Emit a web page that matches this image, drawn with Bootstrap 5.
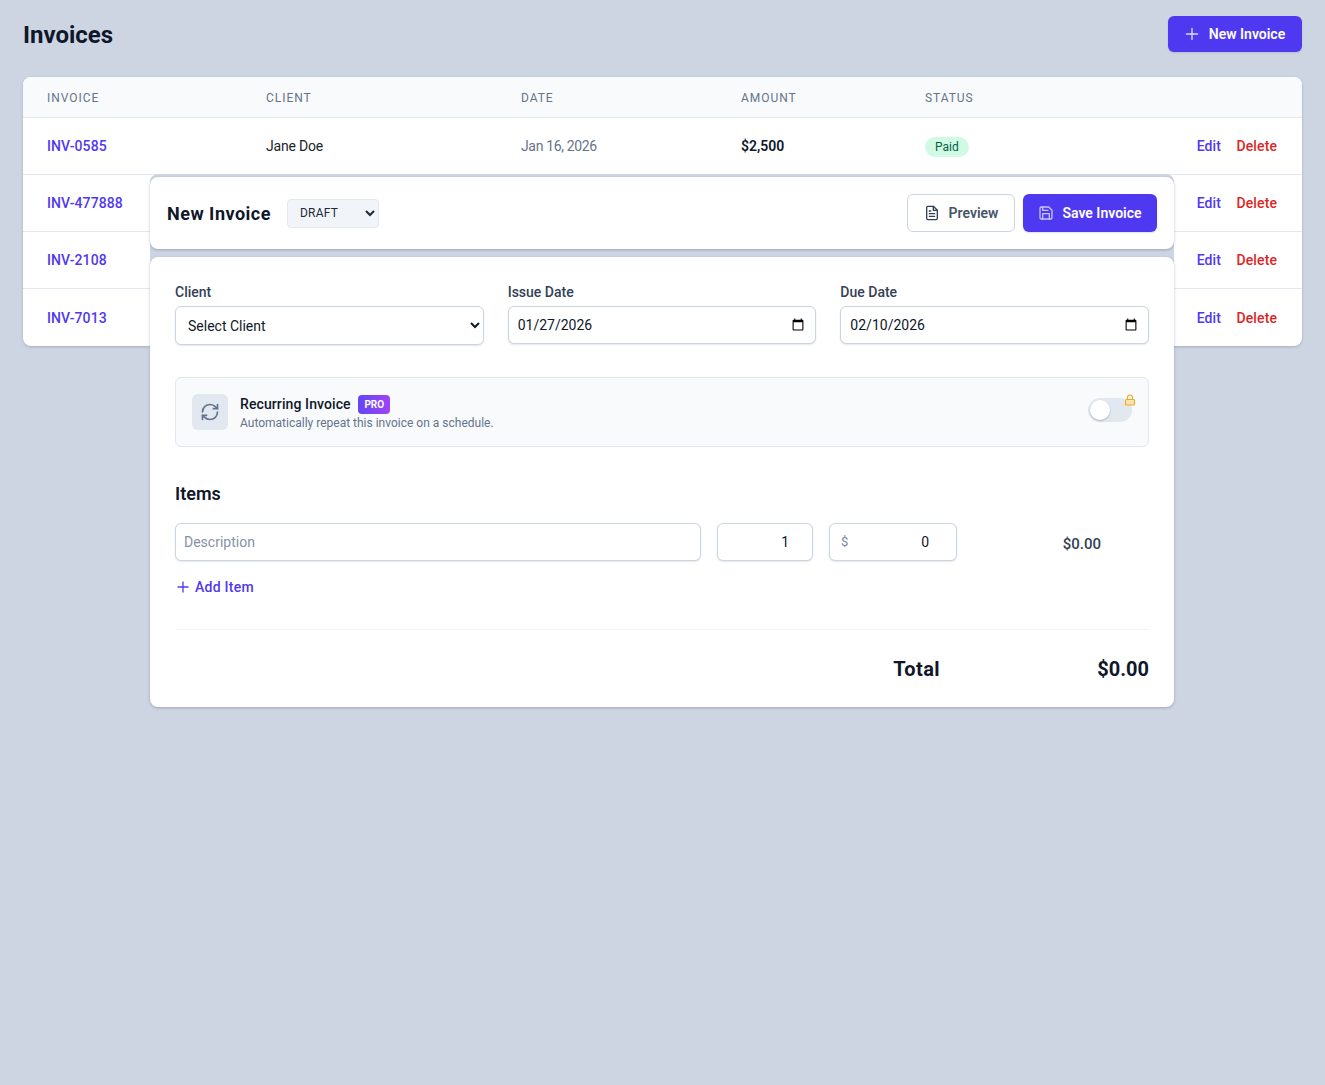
<!DOCTYPE html>
<html lang="en"><head><meta charset="utf-8"><title>Invoices</title>
<link href="https://cdn.jsdelivr.net/npm/bootstrap@5.3.0/dist/css/bootstrap.min.css" rel="stylesheet">
<style>
body{background:#cdd5e3;font-family:Roboto,"Liberation Sans",sans-serif;font-size:14px;color:#0f172a;min-height:1085px;position:relative;padding:16px 23px}
h1.title{font-size:24px;font-weight:700;color:#0f172a;margin:3px 0 0}
.top{height:36px;margin-bottom:25px}
.btn-indigo{background:#4f39f0;color:#fff;border:0;font-weight:600;font-size:14px;border-radius:6px;box-shadow:0 1px 2px rgba(0,0,0,.12)}
.btn-indigo:hover{background:#4f39f0;color:#fff}
.btn-new{height:36px;width:134px;gap:10px}
.tcard{background:#fff;border-radius:8px;box-shadow:0 1px 3px rgba(15,23,42,.2);overflow:hidden}
.tcard table{table-layout:fixed;width:100%;margin:0;--bs-table-bg:transparent;border-collapse:separate;border-spacing:0}
.tcard th{background:#f8fafc;color:#64748b;font-size:12px;font-weight:400;letter-spacing:.95px;height:41px;padding:1px 0 0 24px;vertical-align:middle;border-bottom:1px solid #e2e8f0}
.tcard td{height:57px;padding:1px 0 0 24px;vertical-align:middle;font-size:14px;border-bottom:1px solid #e2e8f0}
.tcard tr:last-child td{border-bottom:0}
.inv{color:#4f39f0;font-weight:500;text-decoration:none;letter-spacing:.1px}
.cl{letter-spacing:-.2px}
.dt{color:#64748b;letter-spacing:-.35px}.amt{font-weight:600;color:#0f172a}
.paid{display:inline-block;background:#d1fae5;color:#065f46;font-size:12px;font-weight:400;border-radius:10px;height:20px;line-height:21px;padding:0 10px;margin-top:1px}
.act{text-align:right;padding-right:25px!important}
.act a{font-weight:500;text-decoration:none;margin-left:12px;letter-spacing:.1px}
.act .e{color:#4f39f0}.act .d{color:#dc2626}
.overlay{position:absolute;left:150px;top:174px;width:1024px;background:#cdd5e3;border-radius:8px;padding-top:3px}
.mcard{background:#fff;border-radius:8px;box-shadow:0 1px 3px rgba(15,23,42,.25)}
.mhead{height:72px;padding:0 17px;margin-bottom:8px}
.mhead h2{font-size:18px;font-weight:700;margin:2px 0 0;color:#0f172a;letter-spacing:.5px}
.form-control,.form-select{border:1px solid #cbd5e1;border-radius:6px;font-size:14px;color:#0f172a;box-shadow:0 1px 2px rgba(15,23,42,.1)}
.mhead .status{appearance:auto;background-image:none;width:92px;height:29px;background-color:#f1f5f9;border:1px solid #e2e8f0;border-radius:4px;font-size:12px;font-weight:400;letter-spacing:.2px;padding:0 0 0 8px;color:#1e293b;box-shadow:none}
.btn-prev{height:38px;width:108px;background:#fff;border:1px solid #cbd5e1;border-radius:6px;color:#475569;font-weight:600;font-size:14px;gap:9px}
.btn-save{height:38px;width:134px;gap:8px}
.mbody{height:450px;padding:25px}
.flabel{font-size:14px;font-weight:500;color:#334155;margin-bottom:4px;line-height:20px;display:block}
.fields{gap:24px;margin-bottom:32px}
.fields>div{flex:1 1 0}
.fields .form-select{appearance:auto;background-image:none;height:39px;padding:0 8px}
.fields .form-control{height:38px;padding:0 8px 0 9px}
.rec{height:70px;background:#f8fafc;border:1px solid #e2e8f0;border-radius:6px;padding:0 16px;gap:12px;position:relative;margin-bottom:34px}
.rico{width:36px;height:36px;background:#e2e8f0;border-radius:6px;flex:none}
.rtxt{padding-top:2px}
.rt{font-weight:500;font-size:14px;color:#0f172a;line-height:19px;letter-spacing:.1px}
.rs{font-size:12px;color:#64748b;line-height:18px}
.pro{background:linear-gradient(90deg,#6246f5,#a044f5);color:#fff;font-size:10px;font-weight:700;border-radius:4px;height:19px;width:32px;line-height:19px;text-align:center;margin-left:4px;letter-spacing:0}
.sw{position:absolute;right:16px;top:20px;width:44px;height:24px;background:#e2e8f0;border-radius:12px}
.sw i{position:absolute;left:2px;top:2px;width:20px;height:20px;border-radius:50%;background:#fff;box-shadow:0 1px 2px rgba(15,23,42,.25)}
.lock{position:absolute;right:12px;top:16px}
.items{font-size:18px;font-weight:600;color:#0f172a;margin:0 0 16px;line-height:26px}
.irow{gap:16px;height:38px}
.irow .form-control{height:38px;flex:none}
.irow .desc{width:526px;padding:0 8px}
.irow .desc::placeholder{color:#8592a6}
.irow .qty{width:96px;text-align:right;padding:0 23px 0 0}
.pw{width:128px;flex:none;position:relative}
.pw .form-control{width:100%;text-align:right;padding:0 27px 0 0}
.pw span{position:absolute;left:12px;top:9px;color:#78869b;font-size:13px;line-height:20px}
.lt{width:176px;flex:none;padding-right:48px;text-align:right;font-size:15px;font-weight:500;color:#334155;line-height:42px}
.add{color:#4f39f0;font-weight:500;text-decoration:none;gap:6px;margin:16px 0 32px 2px;height:20px;letter-spacing:.25px}
.tot{border-top:1px solid #f1f5f9;padding-top:26px;font-size:20px;font-weight:700;color:#0f172a;line-height:26px}
.tot .l{letter-spacing:.4px}
.tot .v{width:209px;text-align:right}
</style></head><body>
<div class="top d-flex justify-content-between align-items-center">
<h1 class="title">Invoices</h1>
<button class="btn btn-indigo btn-new d-flex align-items-center justify-content-center p-0"><svg width="14" height="14" viewBox="0 0 14 14" fill="none" stroke="#dcd8fc" stroke-width="1.4" stroke-linecap="round"><path d="M7 1.5v11M1.5 7h11"/></svg>New Invoice</button>
</div>
<div class="tcard">
<table class="table">
<colgroup><col style="width:219px"><col style="width:255px"><col style="width:220px"><col style="width:184px"><col style="width:190px"><col></colgroup>
<thead><tr><th>INVOICE</th><th>CLIENT</th><th>DATE</th><th>AMOUNT</th><th>STATUS</th><th></th></tr></thead>
<tbody>
<tr><td><a class="inv" href="#">INV-0585</a></td><td class="cl">Jane Doe</td><td class="dt">Jan 16, 2026</td><td class="amt">$2,500</td><td><span class="paid">Paid</span></td><td class="act"><a class="e" href="#">Edit</a> <a class="d" href="#">Delete</a></td></tr>
<tr><td><a class="inv" href="#">INV-477888</a></td><td></td><td></td><td></td><td></td><td class="act"><a class="e" href="#">Edit</a> <a class="d" href="#">Delete</a></td></tr>
<tr><td><a class="inv" href="#">INV-2108</a></td><td></td><td></td><td></td><td></td><td class="act"><a class="e" href="#">Edit</a> <a class="d" href="#">Delete</a></td></tr>
<tr><td><a class="inv" href="#">INV-7013</a></td><td></td><td></td><td></td><td></td><td class="act"><a class="e" href="#">Edit</a> <a class="d" href="#">Delete</a></td></tr>
</tbody></table>
</div>
<div class="overlay">
<div class="mcard mhead d-flex align-items-center justify-content-between">
<div class="d-flex align-items-center gap-3"><h2>New Invoice</h2><select class="form-select status"><option>DRAFT</option></select></div>
<div class="d-flex gap-2">
<button class="btn btn-prev d-flex align-items-center justify-content-center p-0"><svg width="16" height="16" viewBox="0 0 24 24" fill="none" stroke="#334155" stroke-width="2" stroke-linecap="round" stroke-linejoin="round"><path d="M14 2H6a2 2 0 0 0-2 2v16a2 2 0 0 0 2 2h12a2 2 0 0 0 2-2V8z"/><path d="M14 2v6h6M8 13h8M8 17h8M8 9h2"/></svg>Preview</button>
<button class="btn btn-indigo btn-save d-flex align-items-center justify-content-center p-0"><svg width="16" height="16" viewBox="0 0 24 24" fill="none" stroke="#c7c2fb" stroke-width="2" stroke-linecap="round" stroke-linejoin="round"><path d="M19 21H5a2 2 0 0 1-2-2V5a2 2 0 0 1 2-2h11l5 5v11a2 2 0 0 1-2 2z"/><path d="M17 21v-8H7v8M7 3v5h8"/></svg>Save Invoice</button>
</div></div>
<div class="mcard mbody">
<div class="fields d-flex">
<div><label class="flabel">Client</label><select class="form-select"><option>Select Client</option></select></div>
<div><label class="flabel">Issue Date</label><input type="date" class="form-control" value="2026-01-27"></div>
<div><label class="flabel">Due Date</label><input type="date" class="form-control" value="2026-02-10"></div>
</div>
<div class="rec d-flex align-items-center">
<div class="rico d-flex align-items-center justify-content-center"><svg width="20" height="20" viewBox="0 0 24 24" fill="none" stroke="#64748b" stroke-width="2" stroke-linecap="round" stroke-linejoin="round"><path d="M3 12a9 9 0 0 1 9-9 9.75 9.75 0 0 1 6.74 2.74L21 8"/><path d="M21 3v5h-5"/><path d="M21 12a9 9 0 0 1-9 9 9.75 9.75 0 0 1-6.74-2.74L3 16"/><path d="M8 16H3v5"/></svg></div>
<div class="rtxt"><div class="rt d-flex align-items-center">Recurring Invoice&nbsp;<span class="pro">PRO</span></div><div class="rs">Automatically repeat this invoice on a schedule.</div></div>
<div class="sw"><i></i></div>
<svg class="lock" width="12" height="12" viewBox="0 0 12 12" fill="#fde3a7" stroke="#f5a623" stroke-width="1.1"><rect x="1.5" y="5.5" width="9" height="5.5" rx="1"/><path fill="none" d="M3.5 5.5V3.5a2.5 2.5 0 0 1 5 0v2"/></svg>
</div>
<h3 class="items">Items</h3>
<div class="irow d-flex">
<input class="form-control desc" placeholder="Description">
<input class="form-control qty" value="1">
<div class="pw"><span>$</span><input class="form-control" value="0"></div>
<div class="lt">$0.00</div>
</div>
<a href="#" class="add d-inline-flex align-items-center"><svg width="12" height="12" viewBox="0 0 12 12" fill="none" stroke="#4f39f0" stroke-width="1.3" stroke-linecap="round"><path d="M6 1v10M1 6h10"/></svg>Add Item</a>
<div class="tot d-flex justify-content-end"><span class="l">Total</span><span class="v">$0.00</span></div>
</div>
</div>
<script src="https://cdn.jsdelivr.net/npm/bootstrap@5.3.0/dist/js/bootstrap.bundle.min.js"></script>
</body></html>
